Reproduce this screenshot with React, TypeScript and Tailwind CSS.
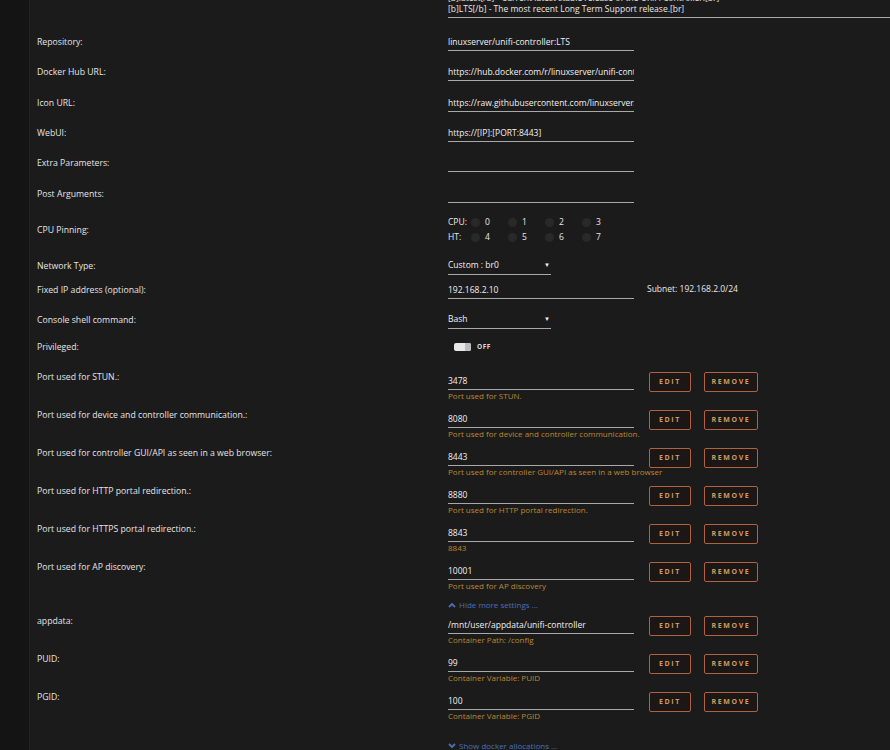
import React from "react";

const FONT = { fontFamily: '"Open Sans", "Noto Sans", Arial, sans-serif' };

function Label({ children }: { children: React.ReactNode }) {
  return <div className="w-[418px] shrink-0 pl-[7px] text-[8.7px] font-medium leading-[10px] text-[#e4e4e4]">{children}</div>;
}

function Input({ value, w = "w-[186px]" }: { value?: string; w?: string }) {
  return (
    <div className={`${w} h-[18px] shrink-0 overflow-hidden whitespace-nowrap border-b-[1.5px] border-[#a8a8a8] text-[8.5px] font-medium leading-[17px] text-[#f0f0f0]`}>
      {value}
    </div>
  );
}

function Select({ value }: { value: string }) {
  return (
    <div className="w-[103px] h-[18px] shrink-0 flex items-center justify-between border-b-[1.5px] border-[#a8a8a8] text-[8.5px] font-medium text-[#f0f0f0]">
      <span>{value}</span>
      <span className="text-[6px] pr-[1px]">▼</span>
    </div>
  );
}

function Row({ h, label, children }: { h: string; label: string; children?: React.ReactNode }) {
  return (
    <div className={`flex ${h} items-center`}>
      <Label>{label}</Label>
      <div className="flex items-center">{children}</div>
    </div>
  );
}

function Buttons() {
  return (
    <div className="flex gap-[13px] ml-[15px]">
      <div className="w-[42px] h-[20px] flex items-center justify-center border-[1.5px] border-[#b0623e] rounded-[2px] bg-[#1a1716] text-[7px] font-bold tracking-[1.6px] text-[#d09a5f]">EDIT</div>
      <div className="w-[54px] h-[20px] flex items-center justify-center border-[1.5px] border-[#b0623e] rounded-[2px] bg-[#1a1716] text-[7px] font-bold tracking-[1.6px] text-[#d09a5f]">REMOVE</div>
    </div>
  );
}

function PortRow({ label, value, help }: { label: string; value: string; help: string }) {
  return (
    <div className="flex h-[38px] items-start">
      <Label>{label}</Label>
      <div className="flex flex-col">
        <div className="flex items-start">
          <Input value={value} />
          <Buttons />
        </div>
        <div className="-mt-[3px] text-[8px] font-medium leading-[14px] text-[#bb882d] whitespace-nowrap">{help}</div>
      </div>
    </div>
  );
}

function CpuLine({ label, nums }: { label: string; nums: number[] }) {
  return (
    <div className="flex items-center h-[15px] text-[8.5px] font-medium text-[#e8e8e8]">
      <span className="w-[23px]">{label}</span>
      {nums.map((n) => (
        <div key={n} className="w-[37px] flex items-center">
          <div className="w-[9px] h-[9px] rounded-full bg-[#2a2929]" />
          <span className="ml-[5px]">{n}</span>
        </div>
      ))}
    </div>
  );
}

export default function App() {
  return (
    <div className="w-[890px] h-[750px] overflow-hidden flex bg-[#1c1b1c]" style={FONT}>
      <div className="w-[30px] shrink-0 bg-[#141414] border-r border-[#232223]" />
      <div className="flex-1 flex flex-col">
        <div className="h-[27px] flex">
          <div className="w-[418px] shrink-0" />
          <div className="flex-1 h-[18px] border-b-[1.5px] border-[#a8a8a8] text-[8.5px] font-medium leading-[11px] text-[#e8e8e8] whitespace-nowrap overflow-hidden">
            <div className="-mt-[8px]">[b]latest[/b] - Current latest stable release of the UniFi Controller.[br]</div>
            <div>[b]LTS[/b] - The most recent Long Term Support release.[br]</div>
          </div>
        </div>
        <Row h="h-[30px]" label="Repository:"><Input value="linuxserver/unifi-controller:LTS" /></Row>
        <Row h="h-[31px]" label="Docker Hub URL:"><Input value="https://hub.docker.com/r/linuxserver/unifi-controller/" /></Row>
        <Row h="h-[30px]" label="Icon URL:"><Input value="https://raw.githubusercontent.com/linuxserver/docker-templates/master/linuxserver.io/img/unifi-icon.png" /></Row>
        <Row h="h-[30px]" label="WebUI:"><Input value="https://[IP]:[PORT:8443]" /></Row>
        <Row h="h-[31px]" label="Extra Parameters:"><Input /></Row>
        <Row h="h-[30px]" label="Post Arguments:"><Input /></Row>
        <Row h="h-[42px]" label="CPU Pinning:">
          <div className="flex flex-col">
            <CpuLine label="CPU:" nums={[0, 1, 2, 3]} />
            <CpuLine label="HT:" nums={[4, 5, 6, 7]} />
          </div>
        </Row>
        <Row h="h-[30px]" label="Network Type:"><Select value="Custom : br0" /></Row>
        <Row h="h-[18px]" label="Fixed IP address (optional):">
          <Input value="192.168.2.10" />
          <span className="ml-[13px] text-[8.5px] font-medium text-[#e8e8e8]">Subnet: 192.168.2.0/24</span>
        </Row>
        <Row h="h-[42px]" label="Console shell command:"><Select value="Bash" /></Row>
        <div className="flex h-[32px] items-start">
          <div className="h-[12px] flex items-center"><Label>Privileged:</Label></div>
          <div className="h-[12px] flex items-center ml-[6px]">
            <div className="w-[17px] h-[8px] rounded-[2px] bg-[#e8e8e8] flex justify-end">
              <div className="w-[6px] h-[8px] rounded-r-[2px] bg-[#bdbdbd]" />
            </div>
            <span className="ml-[6px] text-[6.5px] font-bold tracking-[0.5px] text-[#d8d8d8]">OFF</span>
          </div>
        </div>
        <PortRow label="Port used for STUN.:" value="3478" help="Port used for STUN." />
        <PortRow label="Port used for device and controller communication.:" value="8080" help="Port used for device and controller communication." />
        <PortRow label="Port used for controller GUI/API as seen in a web browser:" value="8443" help="Port used for controller GUI/API as seen in a web browser" />
        <PortRow label="Port used for HTTP portal redirection.:" value="8880" help="Port used for HTTP portal redirection." />
        <PortRow label="Port used for HTTPS portal redirection.:" value="8843" help="8843" />
        <PortRow label="Port used for AP discovery:" value="10001" help="Port used for AP discovery" />
        <div className="h-[16px] flex">
          <div className="w-[418px] shrink-0" />
          <div className="flex items-center h-[9px] text-[8px] font-medium text-[#4a6fb8]">
            <svg width="8" height="6" viewBox="0 0 8 6" className="mr-[3px]"><path d="M1 5 L4 2 L7 5" stroke="#4a6fb8" strokeWidth="1.8" fill="none" /></svg>
            Hide more settings ...
          </div>
        </div>
        <PortRow label="appdata:" value="/mnt/user/appdata/unifi-controller" help="Container Path: /config" />
        <PortRow label="PUID:" value="99" help="Container Variable: PUID" />
        <PortRow label="PGID:" value="100" help="Container Variable: PGID" />
        <div className="h-[20px] flex pt-[11px]">
          <div className="w-[418px] shrink-0" />
          <div className="flex items-center h-[9px] text-[8px] font-medium text-[#4a6fb8]">
            <svg width="8" height="6" viewBox="0 0 8 6" className="mr-[3px]"><path d="M1 1 L4 4 L7 1" stroke="#4a6fb8" strokeWidth="1.8" fill="none" /></svg>
            Show docker allocations ...
          </div>
        </div>
      </div>
    </div>
  );
}
